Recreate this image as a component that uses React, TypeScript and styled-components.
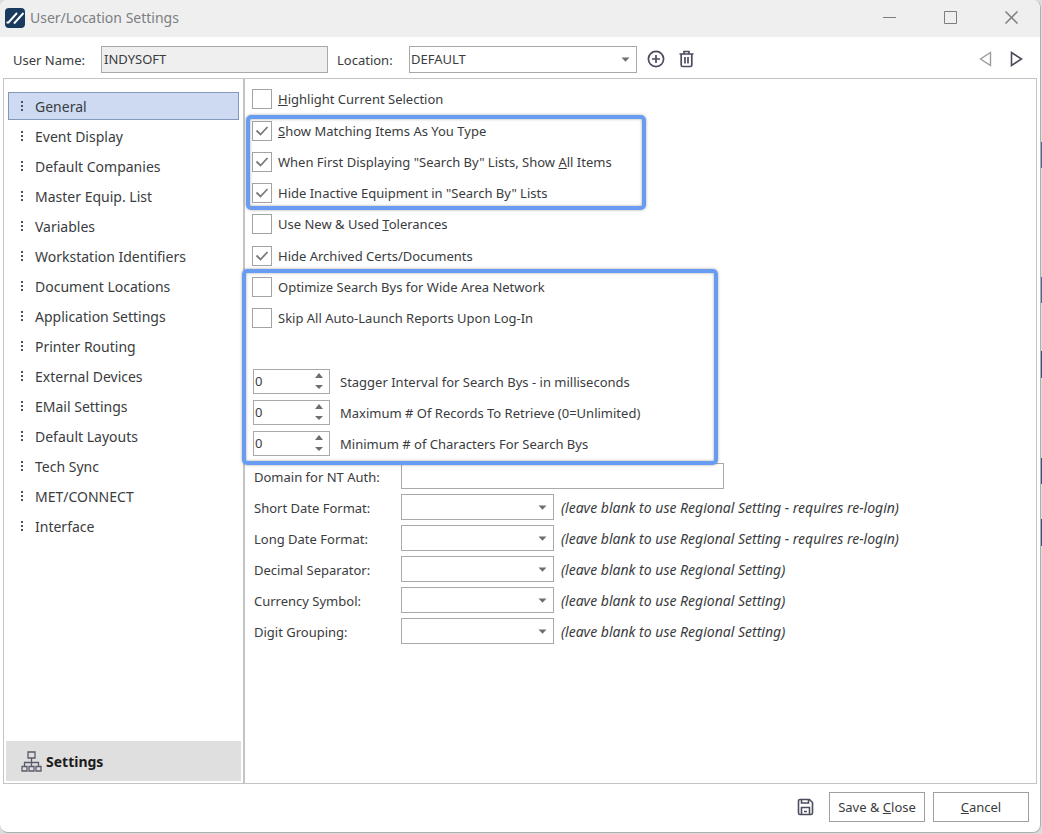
import React, { useState } from "react";
import styled, { createGlobalStyle, css } from "styled-components";

const ink = "#3a3c40";
const line = "#a9a9a9";
const iconInk = "#4b4c5e";

const GlobalStyle = createGlobalStyle`
  *, *::before, *::after { box-sizing: border-box; }
  html, body { margin: 0; }
  body, button, input, select {
    font-family: "Noto Sans", "Open Sans", sans-serif;
    font-size: 13px;
    color: ${ink};
  }
`;

const Desktop = styled.div`
  display: flex;
  min-height: 100vh;
  padding: 0 1px 1px 0;
  background: linear-gradient(
    #dcdcdc 142px, #4a6596 142px, #4a6596 168px,
    #dcdcdc 168px, #dcdcdc 277px, #4a6596 277px, #4a6596 303px,
    #dcdcdc 303px, #dcdcdc 351px, #3b5282 351px, #3b5282 378px,
    #dcdcdc 378px, #dcdcdc 458px, #3b5282 458px, #3b5282 484px,
    #dcdcdc 484px, #dcdcdc 519px, #3b5282 519px, #3b5282 546px,
    #dcdcdc 546px
  );
`;

const Window = styled.div`
  flex: 1;
  display: flex;
  flex-direction: column;
  background: #fff;
  border: 1px solid #adadad;
  border-width: 0 1px 1px 0;
  border-radius: 8px;
  overflow: hidden;
`;

const TitleBar = styled.header`
  display: flex;
  align-items: center;
  height: 37px;
  padding: 0 0 2px 5px;
  background: #efefef;
`;

const Title = styled.h1`
  flex: 1;
  margin: 0 0 0 5px;
  font-size: 14px;
  font-weight: 400;
  color: #7c7f82;
`;

const CaptionButtons = styled.div`
  display: flex;
  margin-right: -2px;
`;

const CaptionButton = styled.button`
  display: grid;
  place-items: center;
  width: 61px;
  height: 35px;
  padding: 0;
  border: 0;
  background: none;
  color: #7d7d7d;
`;

const Toolbar = styled.div`
  display: flex;
  align-items: center;
  height: 41px;
  padding: 4px 12px 0 13px;
`;

const ToolbarLabel = styled.label<{ $width: number }>`
  width: ${(p) => p.$width}px;
`;

const fieldBox = css`
  border: 1px solid ${line};
  border-radius: 0;
  background: #fff;
  outline: 0;
`;

const TextField = styled.input<{ $width: number; $height?: number }>`
  ${fieldBox}
  width: ${(p) => p.$width}px;
  height: ${(p) => p.$height ?? 26}px;
  padding: 0 2px 2px;
  &:read-only { background: #efefef; }
`;

const UserField = styled(TextField)`
  margin-right: 9px;
`;

const SelectBox = styled.span<{ $width: number; $height?: number }>`
  ${fieldBox}
  display: inline-grid;
  align-items: center;
  width: ${(p) => p.$width}px;
  height: ${(p) => p.$height ?? 26}px;

  select, svg { grid-area: 1 / 1; }
  svg { justify-self: end; margin-right: 6px; pointer-events: none; }
  select {
    appearance: none;
    width: 100%;
    height: 100%;
    padding: 0 20px 2px 1px;
    border: 0;
    background: transparent;
    outline: 0;
  }
`;

const IconButton = styled.button`
  display: grid;
  place-items: center;
  width: 31px;
  height: 27px;
  padding: 0;
  border: 0;
  background: none;
  color: ${iconInk};
  &:disabled { color: #9c9c9c; }
`;

const ToolGroup = styled.div<{ $end?: boolean }>`
  display: flex;
  padding-bottom: 2px;
  margin-left: ${(p) => (p.$end ? "auto" : "3px")};
  margin-right: ${(p) => (p.$end ? "-4px" : "0")};
`;

const Body = styled.div`
  flex: 1;
  display: flex;
  margin: 0 3px;
  border: 1px solid #c4c4c4;
`;

const Sidebar = styled.nav`
  display: flex;
  flex-direction: column;
  width: 239px;
  padding: 13px 2px 2px;
`;

const NavList = styled.ul`
  flex: 1;
  display: flex;
  flex-direction: column;
  gap: 2px;
  margin: 0;
  padding: 0 2px;
  list-style: none;
`;

const NavItem = styled.button<{ $active: boolean }>`
  display: flex;
  align-items: center;
  gap: 11px;
  width: 100%;
  height: 28px;
  padding: 0 11px;
  border: 1px solid ${(p) => (p.$active ? "#8498bb" : "transparent")};
  background: ${(p) => (p.$active ? "#cddaf2" : "none")};
  font-size: 14px;
`;

const SidebarFooter = styled.button`
  display: flex;
  align-items: center;
  gap: 4px;
  height: 40px;
  padding: 0 15px;
  border: 0;
  background: #dfdfdf;
  color: #1c1c1c;
  font-size: 14px;
  font-weight: 700;
`;

const Content = styled.main`
  flex: 1;
  padding: 10px 7px;
  border-left: 2px solid #c4c4c4;
`;

const Stack = styled.div<{ $gap: number; $top?: number }>`
  display: flex;
  flex-direction: column;
  align-items: flex-start;
  gap: ${(p) => p.$gap}px;
  margin-top: ${(p) => p.$top ?? 0}px;
`;

const Callout = styled.div<{ $width: number; $left: number; $top: number; $bottom: number }>`
  position: relative;
  display: flex;
  flex-direction: column;
  gap: 11px;

  &::after {
    content: "";
    position: absolute;
    top: -${(p) => p.$top}px;
    bottom: -${(p) => p.$bottom}px;
    left: -${(p) => p.$left}px;
    width: ${(p) => p.$width}px;
    border: 4px solid #679cf0;
    border-radius: 5px;
    box-shadow: 0 0 3px rgba(0, 0, 0, 0.35), inset 0 0 3px rgba(0, 0, 0, 0.35);
    pointer-events: none;
  }
`;

const CheckRow = styled.label`
  display: flex;
  align-items: center;
  gap: 6px;
  height: 20px;
`;

const CheckMark = styled.span`
  display: grid;
  width: 20px;
  height: 20px;

  input, svg { grid-area: 1 / 1; margin: 0; }
  input {
    appearance: none;
    width: 20px;
    height: 20px;
    border: 1px solid #a3a3a3;
    background: #fff;
  }
  svg { visibility: hidden; pointer-events: none; }
  input:checked + svg { visibility: visible; }
`;

const SpinRow = styled.div`
  display: flex;
  align-items: center;
  gap: 10px;
  padding-left: 1px;
`;

const SpinBox = styled.span`
  ${fieldBox}
  display: flex;
  width: 77px;
  height: 25px;

  input {
    flex: 1;
    min-width: 0;
    padding: 0 1px 2px;
    border: 0;
    background: none;
    outline: 0;
  }
`;

const SpinArrows = styled.span`
  display: flex;
  flex-direction: column;
  width: 21px;
  padding-bottom: 1px;

  button {
    flex: 1;
    display: grid;
    place-items: center;
    padding: 0;
    border: 0;
    background: none;
    color: #6d6d6d;
  }
`;

const FieldGrid = styled.div`
  display: grid;
  grid-template-columns: 147px 1fr;
  grid-auto-rows: 26px;
  row-gap: 5px;
  align-items: center;
  margin-top: 7px;
  padding-left: 2px;

  label, em { padding-top: 2px; }
`;

const FieldCell = styled.div`
  display: flex;
  align-items: center;
  gap: 7px;
`;

const Hint = styled.em`
  font-size: 14px;
  line-height: 18px;
  white-space: nowrap;
`;

const Footer = styled.footer`
  display: flex;
  align-items: center;
  justify-content: flex-end;
  gap: 8px;
  height: 48px;
  padding: 0 11px 2px;
`;

const PushButton = styled.button`
  width: 96px;
  height: 30px;
  padding: 0;
  border: 1px solid #a0a0a0;
  background: #fff;
`;

const Logo = () => (
  <svg width="20" height="20" viewBox="0 0 20 20" aria-hidden="true">
    <rect width="20" height="20" rx="4" fill="#183a5e" />
    <path d="M1.500 14.500H3.500L12 5M9 15.500 18.500 5" stroke="#fff" strokeWidth="1.900" fill="none" />
  </svg>
);

const DownArrow = () => (
  <svg width="9" height="5" viewBox="0 0 9 5" aria-hidden="true">
    <path d="M.5.500h8L4.500 4.800z" fill="#6d6d6d" />
  </svg>
);

const Grip = () => (
  <svg width="4" height="12" viewBox="0 0 4 12" fill="#4c5263" aria-hidden="true">
    <path d="M1 1h2v2H1zM1 5h2v2H1zM1 9h2v2H1z" />
  </svg>
);

const Tick = () => (
  <svg width="20" height="20" viewBox="0 0 20 20" aria-hidden="true">
    <path d="M4.500 9.500 8.500 13.500 15.500 6" stroke="#7a7a7a" strokeWidth="1.800" fill="none" />
  </svg>
);

const SettingsTree = () => (
  <svg width="21" height="21" viewBox="0 0 21 21" fill="none" stroke="#5a5b6c" strokeWidth="1.300" aria-hidden="true">
    <path d="M7 1h7v6H7zM10.500 7v9M3.500 15.500v-4h14v4M1 15.500h5v4.500H1zM8 15.500h5v4.500H8zM15 15.500h5v4.500h-5z" />
  </svg>
);

const sections = [
  "General", "Event Display", "Default Companies", "Master Equip. List", "Variables",
  "Workstation Identifiers", "Document Locations", "Application Settings", "Printer Routing",
  "External Devices", "EMail Settings", "Default Layouts", "Tech Sync", "MET/CONNECT", "Interface",
];

const formats = [
  { id: "short-date", label: "Short Date Format:", hint: "(leave blank to use Regional Setting - requires re-login)" },
  { id: "long-date", label: "Long Date Format:", hint: "(leave blank to use Regional Setting - requires re-login)" },
  { id: "decimal", label: "Decimal Separator:", hint: "(leave blank to use Regional Setting)" },
  { id: "currency", label: "Currency Symbol:", hint: "(leave blank to use Regional Setting)" },
  { id: "grouping", label: "Digit Grouping:", hint: "(leave blank to use Regional Setting)" },
];

function Check({ on, children }: { on?: boolean; children: React.ReactNode }) {
  return (
    <CheckRow>
      <CheckMark>
        <input type="checkbox" defaultChecked={on} />
        <Tick />
      </CheckMark>
      <span>{children}</span>
    </CheckRow>
  );
}

function Spin({ id, label }: { id: string; label: string }) {
  const [value, setValue] = useState(0);
  return (
    <SpinRow>
      <SpinBox>
        <input
          id={id}
          inputMode="numeric"
          value={value}
          onChange={(e) => setValue(Number(e.target.value) || 0)}
        />
        <SpinArrows>
          <button type="button" aria-label={`Increase ${label}`} onClick={() => setValue(value + 1)}>
            <svg width="8" height="5" viewBox="0 0 8 5"><path d="M0 5 4 0l4 5z" fill="currentColor" /></svg>
          </button>
          <button type="button" aria-label={`Decrease ${label}`} onClick={() => setValue(Math.max(0, value - 1))}>
            <svg width="8" height="4" viewBox="0 0 8 4"><path d="M0 0h8L4 4z" fill="currentColor" /></svg>
          </button>
        </SpinArrows>
      </SpinBox>
      <label htmlFor={id}>{label}</label>
    </SpinRow>
  );
}

export default function App() {
  const [active, setActive] = useState("General");
  return (
    <>
      <GlobalStyle />
      <Desktop>
        <Window>
          <TitleBar>
            <Logo />
            <Title>User/Location Settings</Title>
            <CaptionButtons>
              <CaptionButton aria-label="Minimize">
                <svg width="13" height="13" viewBox="0 0 13 13" stroke="currentColor"><path d="M0 6.500h13" /></svg>
              </CaptionButton>
              <CaptionButton aria-label="Maximize">
                <svg width="13" height="13" viewBox="0 0 13 13" stroke="currentColor" fill="none"><path d="M.5.500h12v12H.5z" /></svg>
              </CaptionButton>
              <CaptionButton aria-label="Close">
                <svg width="13" height="13" viewBox="0 0 13 13" stroke="currentColor" strokeWidth="1.500"><path d="m.5.500 12 12m0-12-12 12" /></svg>
              </CaptionButton>
            </CaptionButtons>
          </TitleBar>

          <Toolbar>
            <ToolbarLabel htmlFor="user" $width={88}>User Name:</ToolbarLabel>
            <UserField id="user" $width={227} $height={27} value="INDYSOFT" readOnly />
            <ToolbarLabel htmlFor="location" $width={72}>Location:</ToolbarLabel>
            <SelectBox $width={228} $height={27}>
              <select id="location"><option>DEFAULT</option></select>
              <DownArrow />
            </SelectBox>
            <ToolGroup>
              <IconButton aria-label="Add location">
                <svg width="18" height="18" viewBox="0 0 18 18" fill="none" stroke="currentColor" strokeWidth="1.700">
                  <circle cx="9" cy="9" r="7.600" />
                  <path d="M9 5v8M5 9h8" />
                </svg>
              </IconButton>
              <IconButton aria-label="Delete location">
                <svg width="15" height="18" viewBox="0 0 15 18" fill="none" stroke="currentColor" strokeWidth="1.700">
                  <path d="M.5 4h14M5 3.500V1.500h5v2M2.200 4v11q0 1.500 1.500 1.500h7.600q1.500 0 1.500-1.500V4M6 7v6.500M9 7v6.500" />
                </svg>
              </IconButton>
            </ToolGroup>
            <ToolGroup $end>
              <IconButton aria-label="Previous" disabled>
                <svg width="13" height="16" viewBox="0 0 13 16" fill="none" stroke="currentColor" strokeWidth="1.400"><path d="M11.500 1.500v13L1.500 8z" /></svg>
              </IconButton>
              <IconButton aria-label="Next">
                <svg width="13" height="16" viewBox="0 0 13 16" fill="none" stroke="currentColor" strokeWidth="1.600"><path d="M1.500 1.500v13l10-6.500z" /></svg>
              </IconButton>
            </ToolGroup>
          </Toolbar>

          <Body>
            <Sidebar aria-label="Settings sections">
              <NavList>
                {sections.map((name) => (
                  <li key={name}>
                    <NavItem $active={name === active} onClick={() => setActive(name)}>
                      <Grip />
                      {name}
                    </NavItem>
                  </li>
                ))}
              </NavList>
              <SidebarFooter>
                <SettingsTree />
                Settings
              </SidebarFooter>
            </Sidebar>

            <Content>
              <Stack $gap={12}>
                <Check><u>H</u>ighlight Current Selection</Check>
                <Callout $width={400} $left={6} $top={6} $bottom={7}>
                  <Check on><u>S</u>how Matching Items As You Type</Check>
                  <Check on>When First Displaying "Search By" Lists, Show <u>A</u>ll Items</Check>
                  <Check on>Hide Inactive Equipment in "Search By" Lists</Check>
                </Callout>
              </Stack>
              <Stack $gap={12} $top={11}>
                <Check>Use New &amp; Used <u>T</u>olerances</Check>
                <Check on>Hide Archived Certs/Documents</Check>
              </Stack>
              <Stack $gap={0} $top={11}>
                <Callout $width={476} $left={10} $top={8} $bottom={9}>
                  <Check>Optimize Search Bys for Wide Area Network</Check>
                  <Check>Skip All Auto-Launch Reports Upon Log-In</Check>
                  <Stack $gap={6} $top={30}>
                    <Spin id="stagger" label="Stagger Interval for Search Bys - in milliseconds" />
                    <Spin id="max-records" label="Maximum # Of Records To Retrieve (0=Unlimited)" />
                    <Spin id="min-chars" label="Minimum # of Characters For Search Bys" />
                  </Stack>
                </Callout>
              </Stack>
              <FieldGrid>
                <label htmlFor="domain">Domain for NT Auth:</label>
                <FieldCell><TextField id="domain" $width={323} /></FieldCell>
                {formats.map((f) => (
                  <React.Fragment key={f.id}>
                    <label htmlFor={f.id}>{f.label}</label>
                    <FieldCell>
                      <SelectBox $width={153}>
                        <select id={f.id}><option /></select>
                        <DownArrow />
                      </SelectBox>
                      <Hint>{f.hint}</Hint>
                    </FieldCell>
                  </React.Fragment>
                ))}
              </FieldGrid>
            </Content>
          </Body>

          <Footer>
            <IconButton aria-label="Save">
              <svg width="17" height="18" viewBox="0 0 17 18" fill="none" stroke="currentColor" strokeWidth="1.600">
                <path d="M3 1.500h9.500l3 3V15q0 1.500-1.500 1.500H3Q1.500 16.500 1.500 15V3Q1.500 1.500 3 1.500zM4.500 1.500V5h7V1.500M4.500 16.500V9.500h8v7M7 13.500h3" />
              </svg>
            </IconButton>
            <PushButton>Save &amp; <u>C</u>lose</PushButton>
            <PushButton><u>C</u>ancel</PushButton>
          </Footer>
        </Window>
      </Desktop>
    </>
  );
}
